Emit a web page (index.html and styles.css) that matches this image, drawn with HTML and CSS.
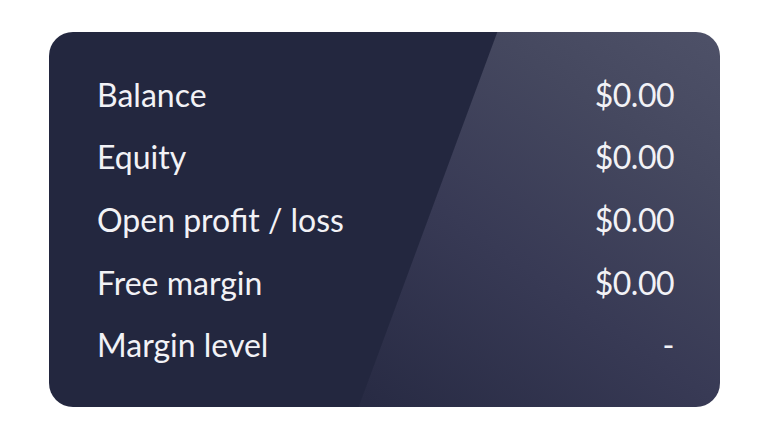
FILE: index.html
```html
<!DOCTYPE html>
<html>
<head>
<meta charset="utf-8">
<link rel="stylesheet" href="styles.css">
</head>
<body>
<div class="card">
  <div class="row"><span class="label">Balance</span><span class="value">$0.00</span></div>
  <div class="row"><span class="label">Equity</span><span class="value">$0.00</span></div>
  <div class="row"><span class="label">Open profit / loss</span><span class="value">$0.00</span></div>
  <div class="row"><span class="label">Free margin</span><span class="value">$0.00</span></div>
  <div class="row"><span class="label">Margin level</span><span class="value">-</span></div>
</div>
</body>
</html>
```
FILE: styles.css
```css
html, body {
  margin: 0;
  background: #ffffff;
}
body {
  padding: 32px 0 0 49px;
  font-family: "Lato", "Noto Sans", sans-serif;
}
.card {
  box-sizing: border-box;
  width: 671px;
  height: 375px;
  border-radius: 24px;
  padding: 31px 46px 31px 48px;
  display: flex;
  flex-direction: column;
  background:
    linear-gradient(110.3deg, #23273f 420px, rgba(35,39,63,0) 421px),
    linear-gradient(35deg, #23273f 0%, #282b44 27%, #383a55 56%, #45485f 81%, #4e5168 100%);
  color: #f2f2f6;
}
.row {
  height: 62.6px;
  display: flex;
  align-items: center;
  justify-content: space-between;
  font-size: 32px;
}
.value {
  letter-spacing: -0.5px;
}
```
